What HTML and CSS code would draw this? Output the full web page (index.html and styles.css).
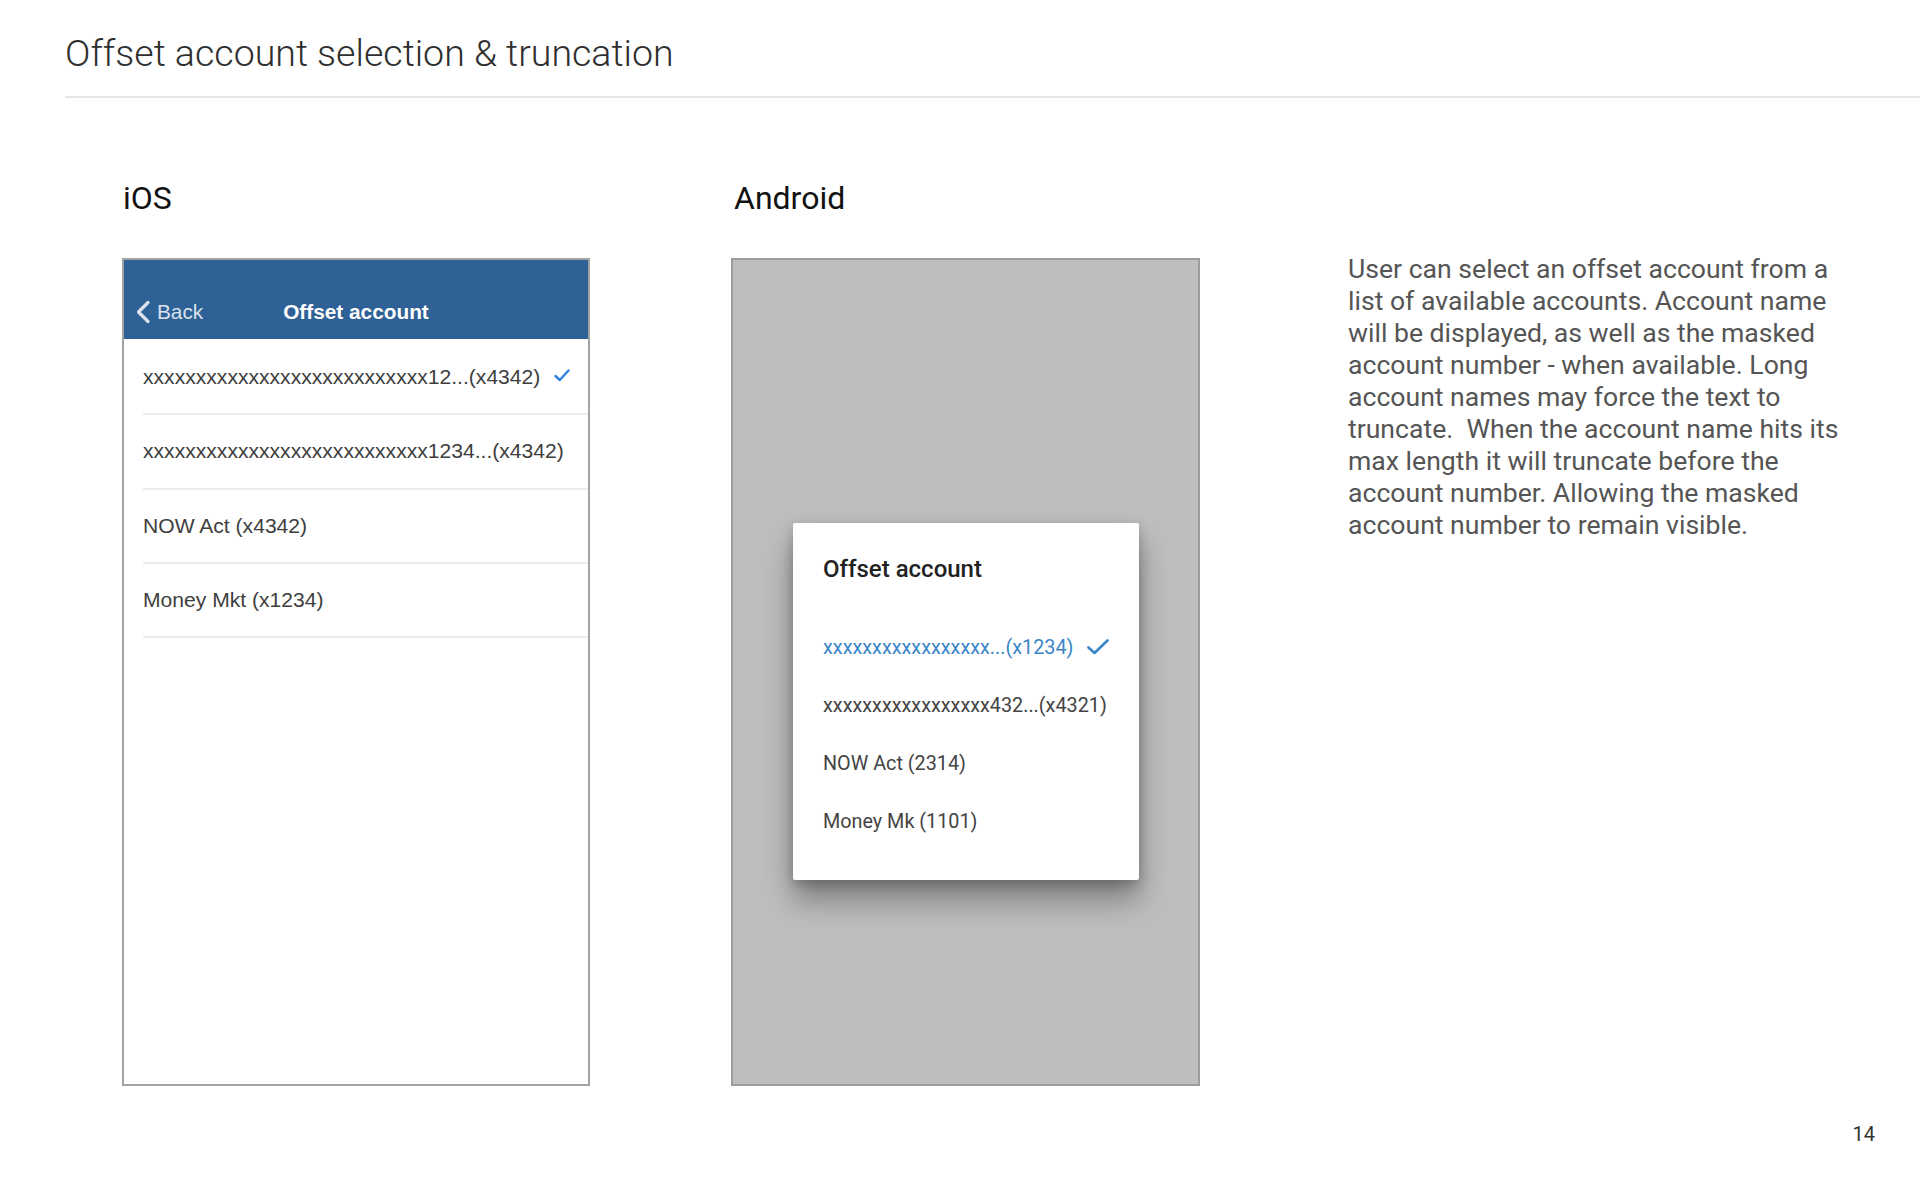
FILE: index.html
```html
<!DOCTYPE html>
<html lang="en">
<head>
<meta charset="utf-8">
<title>Offset account selection &amp; truncation</title>
<link rel="stylesheet" href="styles.css">
</head>
<body>
<header class="page-header">
  <h1 class="page-title">Offset account selection &amp; truncation</h1>
</header>

<main class="showcase">
  <section class="platform">
    <h2 class="platform-title">iOS</h2>
    <div class="ios-phone">
      <div class="ios-nav">
        <div class="ios-back">
          <svg class="ios-chevron" width="16" height="24" viewBox="0 0 16 24"><path d="M13 2.5 L3.5 12 L13 21.5" fill="none" stroke="currentColor" stroke-width="3.2" stroke-linecap="round" stroke-linejoin="round"/></svg>
          <span>Back</span>
        </div>
        <div class="ios-nav-title">Offset account</div>
        <div></div>
      </div>
      <ul class="ios-list">
        <li class="ios-row"><span>xxxxxxxxxxxxxxxxxxxxxxxxxxx12...(x4342)</span>
          <svg class="ios-check" width="16" height="13" viewBox="0 0 16 13"><path d="M1.5 7 L5.8 11 L14.5 1.5" fill="none" stroke="currentColor" stroke-width="2.4" stroke-linecap="round" stroke-linejoin="round"/></svg>
        </li>
        <li class="ios-row"><span>xxxxxxxxxxxxxxxxxxxxxxxxxxx1234...(x4342)</span></li>
        <li class="ios-row"><span>NOW Act (x4342)</span></li>
        <li class="ios-row"><span>Money Mkt (x1234)</span></li>
      </ul>
    </div>
  </section>

  <section class="platform">
    <h2 class="platform-title android-title">Android</h2>
    <div class="android-phone">
      <div class="android-dialog">
        <div class="dialog-title">Offset account</div>
        <ul class="dialog-list">
          <li class="dialog-item is-selected"><span>xxxxxxxxxxxxxxxxx...(x1234)</span>
            <svg class="android-check" width="22" height="16" viewBox="0 0 22 16"><path d="M1.5 8.5 L7.5 14 L20.5 1.5" fill="none" stroke="currentColor" stroke-width="2.6" stroke-linecap="round" stroke-linejoin="round"/></svg>
          </li>
          <li class="dialog-item"><span>xxxxxxxxxxxxxxxxx432...(x4321)</span></li>
          <li class="dialog-item"><span>NOW Act (2314)</span></li>
          <li class="dialog-item"><span>Money Mk (1101)</span></li>
        </ul>
      </div>
    </div>
  </section>

  <section class="description">
    <p>User can select an offset account from a<br>list of available accounts. Account name<br>will be displayed, as well as the masked<br>account number - when available. Long<br>account names may force the text to<br>truncate.&nbsp; When the account name hits its<br>max length it will truncate before the<br>account number. Allowing the masked<br>account number to remain visible.</p>
  </section>
</main>

<footer class="page-footer">14</footer>
</body>
</html>
```

FILE: styles.css
```css
* { box-sizing: border-box; }

html, body {
  margin: 0;
  padding: 0;
  background: #ffffff;
}

body {
  width: 1920px;
  height: 1200px;
  overflow: hidden;
  font-family: Roboto, "Noto Sans", "Liberation Sans", sans-serif;
  color: #333333;
}

/* ---------- header ---------- */
.page-header {
  margin-left: 65px;
  padding-top: 30px;
  padding-bottom: 20px;
  border-bottom: 2px solid #e3e6ea;
}

.page-title {
  margin: 0;
  font-size: 37.5px;
  line-height: 46px;
  font-weight: 300;
  color: #2f2f2f;
}

/* ---------- showcase grid ---------- */
.showcase {
  display: grid;
  grid-template-columns: 468px 469px 1fr;
  column-gap: 141px;
  padding-top: 82px;
  padding-left: 122px;
}

.platform {
  display: flex;
  flex-direction: column;
}

.platform-title {
  margin: 0 0 42px 1px;
  font-size: 32px;
  line-height: 36px;
  font-weight: 400;
  color: #111111;
}

.android-title { margin-left: 3px; }

/* ---------- iOS phone ---------- */
.ios-phone {
  height: 828px;
  border: 2px solid #a2a2a2;
  background: #ffffff;
}

.ios-nav {
  height: 79px;
  padding-top: 25px;
  background: #2e6195;
  display: grid;
  grid-template-columns: 1fr auto 1fr;
  align-items: center;
  font-family: "Liberation Sans", Arial, sans-serif;
}

.ios-back {
  display: flex;
  align-items: center;
  gap: 6px;
  padding-left: 11px;
  color: #dbe3ec;
  font-size: 20.8px;
}

.ios-chevron { display: block; }

.ios-nav-title {
  color: #ffffff;
  font-size: 20.8px;
  font-weight: 700;
}

.ios-list {
  list-style: none;
  margin: 0;
  padding: 2px 0 0;
}

.ios-row {
  height: 74.3px;
  margin-left: 19px;
  padding-right: 18px;
  border-bottom: 2px solid #ececec;
  display: flex;
  align-items: center;
  justify-content: space-between;
  font-family: "Liberation Sans", Arial, sans-serif;
  font-size: 21.1px;
  color: #3e3e3e;
}

.ios-check {
  color: #2f80e0;
  margin-top: -4px;
}

/* ---------- Android phone ---------- */
.android-phone {
  height: 828px;
  border: 2px solid #9c9c9c;
  background: #bebebe;
  display: flex;
  flex-direction: column;
  align-items: center;
  padding-top: 263px;
  padding-left: 1px;
}

.android-dialog {
  width: 346px;
  height: 357px;
  background: #ffffff;
  border-radius: 2px;
  padding: 28px 0 0 30px;
  box-shadow: 0 20px 30px rgba(0, 0, 0, 0.34), 0 4px 12px rgba(0, 0, 0, 0.22);
}

.dialog-title {
  font-size: 24px;
  line-height: 36px;
  font-weight: 500;
  color: #222222;
}

.dialog-list {
  list-style: none;
  margin: 31px 0 0;
  padding: 0;
}

.dialog-item {
  height: 58px;
  display: flex;
  align-items: center;
  gap: 14px;
  font-size: 19.8px;
  color: #444444;
}

.dialog-item.is-selected { color: #3b86c8; }

.android-check { color: #3b86c8; }

/* ---------- description ---------- */
.description {
  padding-left: 7px;
  padding-top: 73px;
}

.description p {
  margin: 0;
  font-size: 26.6px;
  line-height: 32px;
  font-weight: 400;
  color: #555555;
}

/* ---------- footer ---------- */
.page-footer {
  margin-top: 37px;
  padding-right: 45px;
  text-align: right;
  font-size: 20px;
  line-height: 22px;
  color: #333333;
}
```
